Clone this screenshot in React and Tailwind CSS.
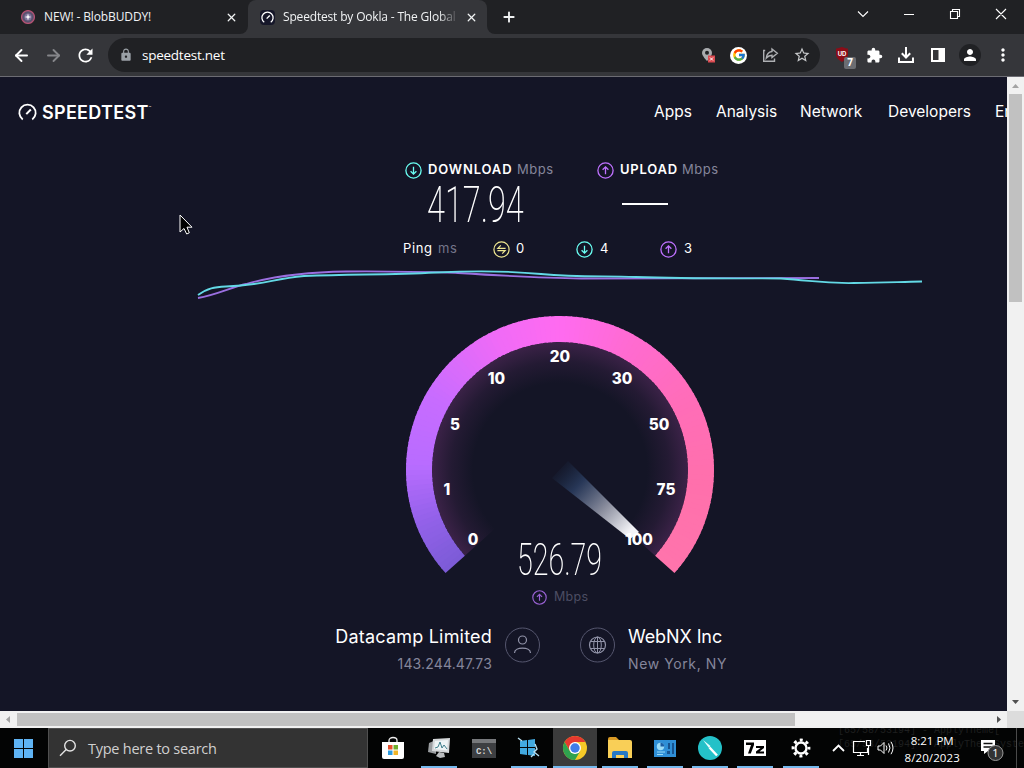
import {
  LuArrowLeft,
  LuArrowRight,
  LuX,
  LuPlus,
} from "react-icons/lu";
import {
  MdRefresh,
  MdLock,
  MdStarOutline,
  MdExtension,
  MdPerson,
  MdMoreVert,
} from "react-icons/md";
import { FcGoogle } from "react-icons/fc";

const CENTER = 160;

const GAUGE_STOPS = [
  [-132, [124, 91, 214]],
  [-112, [145, 97, 232]],
  [-88, [184, 108, 255]],
  [-60, [200, 108, 255]],
  [-25, [240, 107, 246]],
  [0, [255, 107, 240]],
  [30, [255, 107, 208]],
  [60, [255, 109, 185]],
  [95, [255, 112, 172]],
  [132, [255, 116, 172]],
];

const TICKS = [
  { label: "0", x: 73, y: 235 },
  { label: "1", x: 47, y: 185 },
  { label: "5", x: 55, y: 120 },
  { label: "10", x: 96.5, y: 74 },
  { label: "20", x: 160, y: 52 },
  { label: "30", x: 222, y: 74 },
  { label: "50", x: 259, y: 120 },
  { label: "75", x: 266, y: 185 },
  { label: "100", x: 239, y: 235 },
];

function polar(radius, deg) {
  const rad = (deg * Math.PI) / 180;
  return [CENTER + radius * Math.sin(rad), CENTER - radius * Math.cos(rad)];
}

function colorAt(deg) {
  let i = 0;
  while (i < GAUGE_STOPS.length - 2 && deg > GAUGE_STOPS[i + 1][0]) i++;
  const [a, from] = GAUGE_STOPS[i];
  const [b, to] = GAUGE_STOPS[i + 1];
  const t = (deg - a) / (b - a);
  return `rgb(${from.map((c, k) => Math.round(c + (to[k] - c) * t)).join(",")})`;
}

function Gauge() {
  const segments = [];
  for (let deg = -132; deg < 132; deg += 2) {
    const [x1, y1] = polar(141, deg);
    const [x2, y2] = polar(141, Math.min(deg + 2.6, 132));
    segments.push(
      <path
        key={deg}
        d={`M${x1} ${y1}A141 141 0 0 1 ${x2} ${y2}`}
        stroke={colorAt(deg + 1)}
        strokeWidth="26"
        fill="none"
      />
    );
  }
  const [sx, sy] = polar(128, -132);
  const [ex, ey] = polar(128, 132);

  return (
    <svg width="320" height="266" viewBox="0 0 320 266" className="block">
      <defs>
        <radialGradient id="glow" gradientUnits="userSpaceOnUse" cx="160" cy="160" r="128">
          <stop offset="0.68" stopColor="#6b3270" stopOpacity="0" />
          <stop offset="0.85" stopColor="#6b3270" stopOpacity="0.18" />
          <stop offset="1" stopColor="#6b3270" stopOpacity="0.45" />
        </radialGradient>
        <linearGradient id="needle" gradientUnits="userSpaceOnUse" x1="158" y1="155" x2="235" y2="228">
          <stop offset="0" stopColor="#1d3352" stopOpacity="0" />
          <stop offset="0.27" stopColor="#2b3d60" stopOpacity="0.85" />
          <stop offset="0.6" stopColor="#8b8e9e" />
          <stop offset="0.92" stopColor="#f3f3f7" />
        </linearGradient>
      </defs>
      <path d={`M160 160L${sx} ${sy}A128 128 0 1 1 ${ex} ${ey}Z`} fill="url(#glow)" />
      {segments}
      <path d="M168 151L239 222L230 229L152 168Z" fill="url(#needle)" />
      {TICKS.map((tick) => (
        <text
          key={tick.label}
          x={tick.x}
          y={tick.y}
          textAnchor="middle"
          fill="#fff"
          fontSize="15.3"
          fontWeight="800"
          fontFamily="Inter, sans-serif"
        >
          {tick.label}
        </text>
      ))}
    </svg>
  );
}

function CircleArrow({ color, up, size = 17 }) {
  return (
    <svg width={size} height={size} viewBox="0 0 17 17" fill="none" stroke={color} strokeWidth="1.3" className="shrink-0">
      <circle cx="8.5" cy="8.5" r="7.6" />
      <path d={up ? "M8.5 12.3V5M5.6 7.8L8.5 4.9L11.4 7.8" : "M8.5 4.7V12M5.6 9.2L8.5 12.1L11.4 9.2"} />
    </svg>
  );
}

function PingIcon() {
  return (
    <svg width="17" height="17" viewBox="0 0 17 17" fill="none" stroke="#f0e891" strokeWidth="1.2" className="shrink-0">
      <circle cx="8.5" cy="8.5" r="7.6" />
      <path d="M12.6 7.3H4.9L7.8 4.4" />
      <path d="M4.4 9.7H12.1L9.2 12.6" />
    </svg>
  );
}

function SpeedLogo({ size = 19 }) {
  return (
    <svg width={size} height={size} viewBox="0 0 20 20" fill="none" stroke="#fff" strokeWidth="1.9">
      <path d="M5 17.3A8.6 8.6 0 1 1 15 17.3" />
      <path d="M8.7 11.7L13.5 6.8" strokeWidth="2.1" />
    </svg>
  );
}

function TabStrip() {
  return (
    <div className="flex h-[34px] bg-[#202124] text-[12px] text-[#f1f3f4]">
      <div className="flex w-[240px] items-center pl-[21px]">
        <svg width="14" height="14" viewBox="0 0 14 14">
          <circle cx="7" cy="7" r="6.4" fill="#5b526f" stroke="#b55273" strokeWidth="1.3" />
          <circle cx="7" cy="7" r="3.6" fill="#81759c" />
          <path d="M7 3.6L7.8 6.2L10.4 7L7.8 7.8L7 10.4L6.2 7.8L3.6 7L6.2 6.2Z" fill="#fff" />
        </svg>
        <span className="ml-[9px] w-[181px] whitespace-nowrap tracking-[-0.12px]">NEW! - BlobBUDDY!</span>
        <LuX size={13} strokeWidth={2.4} />
      </div>
      <div className="flex items-end">
        <div className="h-2 w-2 bg-[#35363a]">
          <div className="h-2 w-2 rounded-br-lg bg-[#202124]" />
        </div>
      </div>
      <div className="flex w-[239px] items-center rounded-t-lg bg-[#35363a] pl-[12px]">
        <div className="flex size-[15px] items-center justify-center rounded-sm bg-[#16172a]">
          <SpeedLogo size={13} />
        </div>
        <span className="ml-[8px] w-[173px] overflow-hidden whitespace-nowrap tracking-[-0.17px] [mask-image:linear-gradient(to_right,#000_155px,transparent_176px)]">
          Speedtest by Ookla - The Global
        </span>
        <LuX size={13} strokeWidth={2.4} className="ml-[9px]" />
      </div>
      <div className="flex items-end">
        <div className="h-2 w-2 bg-[#35363a]">
          <div className="h-2 w-2 rounded-bl-lg bg-[#202124]" />
        </div>
      </div>
      <div className="flex w-[28px] items-center justify-center">
        <LuPlus size={16} strokeWidth={2.8} />
      </div>
      <svg width="170" height="28" viewBox="0 0 170 28" className="ml-auto" fill="none" stroke="#fff" strokeWidth="1.1">
        <path d="M4 11.5L9 16.5L14 11.5" />
        <path d="M50 14.5H60M96.5 11.5H103.5V18.5H96.5ZM98.5 11.5V9.5H105.5V16.5H103.5M142 9L152 19M152 9L142 19" />
      </svg>
    </div>
  );
}

function Toolbar() {
  return (
    <div className="flex h-[43px] items-center border-b border-[#6c6c73] bg-[#35363a] text-white">
      <LuArrowLeft size={19} strokeWidth={2.4} className="ml-3" />
      <LuArrowRight size={19} strokeWidth={2.4} className="ml-[13px] text-[#85868a]" />
      <MdRefresh size={21} className="ml-[12px]" />
      <div className="ml-[12px] flex h-[34px] w-[712px] items-center rounded-full bg-[#202124] pl-[11px]">
        <MdLock size={14} className="text-[#9aa0a6]" />
        <span className="ml-[9px] text-[13.5px] tracking-[-0.25px]">speedtest.net</span>
        <div className="ml-auto flex items-center pr-[9px]">
          <svg width="16" height="18" viewBox="0 0 16 18" className="mr-[14px]">
            <path d="M7 2A5 5 0 0 0 2 7C2 10 7 15 7 15C7 15 12 10 12 7A5 5 0 0 0 7 2Z" fill="#a9abae" />
            <circle cx="7" cy="6.7" r="2" fill="#202124" />
            <rect x="8" y="9.5" width="7" height="7" fill="#db4a50" />
            <path d="M10 11.5L13 14.5M13 11.5L10 14.5" stroke="#fff" />
          </svg>
          <div className="mr-[15px] flex size-[17px] items-center justify-center rounded-full bg-white">
            <FcGoogle size={14} />
          </div>
          <svg width="17" height="16" viewBox="0 0 17 16" fill="none" stroke="#aeb0b3" strokeWidth="1.4" className="mr-[14px]">
            <path d="M3.2 3.5H1.7V14.3H12.5V11.5" />
            <path d="M10 2L15.3 6.3L10 10.5V8.2C7.5 8.2 6 9 4.3 11C4.7 7.5 6.6 5 10 4.5Z" />
          </svg>
          <MdStarOutline size={18} className="text-[#c6c8ca]" />
        </div>
      </div>
      <div className="relative ml-[14px] size-[17px]">
        <svg width="17" height="17" viewBox="0 0 17 17">
          <path d="M2 1.5C4.5 1.5 7 0 8 0C10 .8 12 1.5 14 1.5V7C14 11 11 13 8 15C5 13 2 11 2 7Z" fill="#8b0d18" />
          <text x="8" y="9" textAnchor="middle" fontSize="6" fontWeight="700" fill="#fff" fontFamily="Inter, sans-serif">UD</text>
        </svg>
        <span className="absolute left-[10px] top-[10px] flex h-[12px] w-[12px] items-center justify-center rounded-[2px] bg-[#6b6d72] text-[10px] font-bold">
          7
        </span>
      </div>
      <MdExtension size={17} className="ml-[15px]" />
      <svg width="18" height="18" viewBox="0 0 18 18" className="ml-[14px]" fill="none" stroke="#fff" strokeWidth="2">
        <path d="M9 1V11M4.8 7.3L9 11.5L13.2 7.3M2 11.5V16H16V11.5" />
      </svg>
      <svg width="14" height="14" viewBox="0 0 14 14" className="ml-[16px]" fill="none" stroke="#fff" strokeWidth="2">
        <path d="M1 1H13V13H1Z" />
        <path d="M8.5 1H13V13H8.5Z" fill="#fff" />
      </svg>
      <div className="ml-[14px] flex size-[22px] items-center justify-center rounded-full bg-[#202124]">
        <MdPerson size={18} />
      </div>
      <MdMoreVert size={20} className="ml-[12px]" />
    </div>
  );
}

function SiteHeader() {
  return (
    <div className="flex h-[70px] w-[1120px] items-center pl-[18px] text-white">
      <SpeedLogo size={19} />
      <div className="ml-[5px] mt-[2px] flex w-[110px] items-start">
        <span className="whitespace-nowrap text-[18px] font-semibold leading-6 tracking-[0.3px]">SPEEDTEST</span>
        <span className="mt-[5px] text-[4px] leading-none">™</span>
      </div>
      <div className="ml-[502px] flex text-[15.5px]">
        <span className="w-[62px]">Apps</span>
        <span className="w-[84px]">Analysis</span>
        <span className="w-[88px]">Network</span>
        <span className="w-[107px]">Developers</span>
        <span>En</span>
      </div>
    </div>
  );
}

function Results() {
  return (
    <>
      <div className="flex pl-[405px] pt-[13px] text-white">
        <div className="w-[192px]">
          <div className="flex h-5 items-center whitespace-nowrap text-[13px]">
            <CircleArrow color="#6afff3" />
            <span className="ml-[6px] w-[89px] font-semibold tracking-[0.85px]">DOWNLOAD</span>
            <span className="tracking-[0.5px] text-[#85869b]">Mbps</span>
          </div>
          <div className="ml-[22px] flex h-[50px] items-center">
            <span className="origin-left scale-x-[0.65] whitespace-nowrap font-[Roboto] text-[50px] font-extralight leading-none">
              417.94
            </span>
          </div>
        </div>
        <div>
          <div className="flex h-5 items-center whitespace-nowrap text-[13px]">
            <CircleArrow color="#bf71ff" up />
            <span className="ml-[6px] w-[62px] font-semibold tracking-[0.8px]">UPLOAD</span>
            <span className="tracking-[0.5px] text-[#85869b]">Mbps</span>
          </div>
          <div className="ml-[25px] mt-[23px] h-[2px] w-[46px] bg-white" />
        </div>
      </div>
      <div className="mt-[9px] flex h-5 items-center pl-[403px] text-[13px] text-white">
        <span className="w-[35px] tracking-[0.6px]">Ping</span>
        <span className="w-[55px] tracking-[0.6px] text-[#74758a]">ms</span>
        <PingIcon />
        <span className="ml-[6px] w-[60px]">0</span>
        <CircleArrow color="#6afff3" />
        <span className="ml-[7px] w-[60px]">4</span>
        <CircleArrow color="#bf71ff" up />
        <span className="ml-[7px]">3</span>
      </div>
      <svg width="730" height="34" viewBox="0 0 730 34" className="ml-[196px] mt-[8px] block" fill="none" strokeWidth="1.8">
        <path d="M2 31C20 28 36 20 50 17C75 10 110 5 150 4.5C200 4 230 5 262 6C310 9 345 11 385 11.5C450 12 520 11 623 11" stroke="#9b6fe0" />
        <path d="M2 28C12 21 18 20 30 19.5C70 18 75 12 108 9C160 7 190 8 240 5.5C290 3 320 4.5 345 7C380 10 400 9 440 10C500 12 540 11 585 11.5C620 14 625 16.5 658 16C690 16 700 15 726 14.5" stroke="#63d9e5" />
      </svg>
    </>
  );
}

function GaugePanel() {
  return (
    <div className="relative ml-[400px] mt-[9px] h-[313px] w-[320px]">
      <Gauge />
      <div className="absolute left-[117px] top-[228px] flex h-[44px] items-center">
        <span className="origin-left scale-x-[0.65] whitespace-nowrap font-[Roboto] text-[44px] font-extralight leading-none text-white">
          526.79
        </span>
      </div>
      <div className="flex items-center pl-[132px] pt-[12px] text-[12.5px] text-[#4c4d63]">
        <CircleArrow color="#9a62d4" up size={15} />
        <span className="ml-[7px] tracking-[0.3px]">Mbps</span>
      </div>
    </div>
  );
}

function HostInfo() {
  return (
    <div className="flex w-[1007px] items-center text-[18px] leading-[27px] text-white">
      <div className="w-[492px] text-right">
        <p className="tracking-[0.2px]">Datacamp Limited</p>
        <p className="text-[14px] tracking-[0.15px] text-[#85869b]">143.244.47.73</p>
      </div>
      <svg width="129" height="36" viewBox="0 0 129 36" className="mb-[11px] ml-[7px]" fill="none" stroke="#9193a8">
        <circle cx="23.5" cy="18" r="17" stroke="#55566e" />
        <circle cx="23.5" cy="13" r="4" strokeWidth="1.2" />
        <path d="M15.5 26C15.5 19.5 31.5 19.5 31.5 26" strokeWidth="1.2" />
        <circle cx="98.5" cy="18" r="17" stroke="#55566e" />
        <circle cx="98.5" cy="18" r="8" strokeWidth="1.2" />
        <ellipse cx="98.5" cy="18" rx="3.8" ry="8" />
        <path d="M98.5 10V26M91.5 14.5H105.5M91.5 21.5H105.5" />
      </svg>
      <div>
        <p className="tracking-[-0.1px]">WebNX Inc</p>
        <p className="text-[14px] tracking-[0.6px] text-[#85869b]">New York, NY</p>
      </div>
    </div>
  );
}

function Page() {
  return (
    <div className="flex h-[634px]">
      <div className="relative w-[1007px] overflow-hidden bg-[#141526] font-[Inter]">
        <SiteHeader />
        <Results />
        <GaugePanel />
        <HostInfo />
        <svg width="14" height="21" viewBox="0 0 14 21" className="absolute left-[179px] top-[137px]">
          <path d="M1 1V18L5 14.5L7.7 20L10.3 18.8L8 13.2H13Z" fill="#000" stroke="#fff" />
        </svg>
      </div>
      <div className="flex w-[17px] flex-col items-center bg-[#f1f1f1]">
        <svg width="17" height="17" viewBox="0 0 17 17">
          <path d="M5 11L8.5 7L12 11Z" fill="#a3a3a3" />
        </svg>
        <div className="h-[208px] w-[13px] bg-[#c1c1c1]" />
        <svg width="17" height="17" viewBox="0 0 17 17" className="mt-auto">
          <path d="M5 6L8.5 10L12 6Z" fill="#505050" />
        </svg>
      </div>
    </div>
  );
}

function HorizontalScrollbar() {
  return (
    <div className="flex h-[17px] items-center bg-[#f1f1f1]">
      <svg width="17" height="17" viewBox="0 0 17 17">
        <path d="M10 5L6 8.5L10 12Z" fill="#a3a3a3" />
      </svg>
      <div className="h-[13px] w-[778px] bg-[#c1c1c1]" />
      <svg width="17" height="17" viewBox="0 0 17 17" className="ml-auto">
        <path d="M7 5L11 8.5L7 12Z" fill="#505050" />
      </svg>
      <div className="h-full w-[17px] bg-[#dcdcdc]" />
    </div>
  );
}

function StoreIcon() {
  return (
    <svg width="24" height="24" viewBox="0 0 24 24">
      <path d="M8 7V4.5C8 0.5 16 0.5 16 4.5V7" fill="none" stroke="#eee" strokeWidth="1.3" />
      <path d="M1 6H23V21Q23 23 21 23H3Q1 23 1 21Z" fill="#fff" />
      <path d="M7 9H11.5V13.5H7Z" fill="#e5502d" />
      <path d="M12.5 9H17V13.5H12.5Z" fill="#6fae2e" />
      <path d="M7 14.5H11.5V19H7Z" fill="#2c9be0" />
      <path d="M12.5 14.5H17V19H12.5Z" fill="#f0b428" />
    </svg>
  );
}

function MonitorIcon() {
  return (
    <svg width="24" height="24" viewBox="0 0 24 24">
      <path d="M2 7L9 4V18L1 16Z" fill="#9a9da0" />
      <path d="M6 3L23 2L22 17L5 15Z" fill="#d5d8da" />
      <path d="M8 5L21 4L20 14.5L7 13Z" fill="#eef4f5" />
      <path d="M8 12L11 11L13 6L15 12L17 9L20 13" fill="none" stroke="#3f7f8c" />
      <path d="M12 16L17 17L18 21L13 22L9 20Z" fill="#b9bcbe" />
    </svg>
  );
}

function CmdIcon() {
  return (
    <svg width="24" height="19" viewBox="0 0 24 19">
      <path d="M0 0H24V19H0Z" fill="#3d3f42" />
      <path d="M0 0H24V4H0Z" fill="#77797c" />
      <text x="12" y="14.5" textAnchor="middle" fontSize="9" fontWeight="700" fill="#d8d8d8" fontFamily="'Liberation Mono', monospace">
        C:\
      </text>
    </svg>
  );
}

function TilesIcon() {
  return (
    <svg width="24" height="24" viewBox="0 0 24 24">
      <path d="M3 5L10 4V11H3ZM11 4L18 3V11H11ZM3 12H10V19L3 18ZM11 12H18V20L11 19Z" fill="#42a9df" />
      <path d="M1 2L5 5M18 8L20 13L17 16L22 20M14 21L17 18" stroke="#b8dff0" strokeWidth="1.4" fill="none" />
    </svg>
  );
}

function ChromeIcon() {
  return (
    <svg width="26" height="26" viewBox="0 0 26 26">
      <circle cx="13" cy="13" r="12" fill="#f6c927" />
      <path d="M13 7H23.4A12 12 0 0 0 2.6 7L7.8 16Z" fill="#e5392f" />
      <path d="M2.6 7A12 12 0 0 0 13 25L18.2 16L13 19L7.8 16Z" fill="#2fa24f" />
      <circle cx="13" cy="13" r="6" fill="#fff" />
      <circle cx="13" cy="13" r="4.7" fill="#3f7de8" />
    </svg>
  );
}

function FolderIcon() {
  return (
    <svg width="26" height="24" viewBox="0 0 26 24">
      <path d="M1 3Q1 1 3 1H9L12 4H1Z" fill="#d99a25" />
      <path d="M1 4H23Q25 4 25 6V22H1Z" fill="#f9cf57" />
      <path d="M5 22V17Q5 15 7 15H19Q21 15 21 17V22H17V19H9V22Z" fill="#2578c4" />
    </svg>
  );
}

function PanelIcon() {
  return (
    <svg width="22" height="17" viewBox="0 0 22 17">
      <path d="M0 0H22V17H0Z" fill="#2f8fd6" />
      <circle cx="6.5" cy="6.5" r="3.7" fill="#9bdcf7" />
      <path d="M6.5 6.5V2.8A3.7 3.7 0 0 1 10.2 6.5Z" fill="#1d5fa5" />
      <path d="M3 12H11M3 14.5H9" stroke="#9bdcf7" />
      <path d="M14 3H16V9H14ZM18 3H20V14H18ZM13 11H16V14H13Z" fill="#16538f" />
    </svg>
  );
}

function PenIcon() {
  return (
    <svg width="24" height="24" viewBox="0 0 24 24">
      <circle cx="12" cy="12" r="12" fill="#24c1c8" />
      <path d="M5 4L12.5 10L11 12Z" fill="#e9ffff" />
      <path d="M11.5 11.5L19 19.5" stroke="#fff" strokeWidth="2.4" />
    </svg>
  );
}

function SevenZipIcon() {
  return (
    <svg width="22" height="16" viewBox="0 0 22 16">
      <path d="M0 0H22V16H0Z" fill="#fff" />
      <path d="M2 2.5H10V5L6.8 13.5H4L7 5H2Z" fill="#000" />
      <path d="M12 6H20V8L15.5 11.5H20V13.5H12V11.5L16.5 8H12Z" fill="#000" />
    </svg>
  );
}

function GearIcon() {
  return (
    <svg width="20" height="20" viewBox="0 0 20 20" fill="none" stroke="#fff">
      <circle cx="10" cy="10" r="5.5" strokeWidth="2.4" />
      <circle cx="10" cy="10" r="8" strokeWidth="2.8" strokeDasharray="3 3.283" strokeDashoffset="1.5" />
    </svg>
  );
}

const APPS = [
  { name: "monitor", icon: MonitorIcon, open: true },
  { name: "cmd", icon: CmdIcon },
  { name: "tiles", icon: TilesIcon, open: true },
  { name: "chrome", icon: ChromeIcon, open: true, active: true },
  { name: "files", icon: FolderIcon, open: true },
  { name: "panel", icon: PanelIcon, open: true },
  { name: "pen", icon: PenIcon, open: true },
  { name: "7zip", icon: SevenZipIcon, open: true },
  { name: "settings", icon: GearIcon, open: true },
];

function AppButton({ icon: Icon, open, active }) {
  return (
    <div className="flex h-10 w-[45.2px] flex-col items-center">
      <div className={active ? "flex h-[38px] w-11 items-center justify-center bg-[#3b3b3b] pt-[2px]" : "flex h-[38px] w-11 items-center justify-center pt-[2px]"}>
        <Icon />
      </div>
      {open && <div className={active ? "h-[2px] w-11 bg-[#76b9ed]" : "h-[2px] w-9 bg-[#76b9ed]"} />}
    </div>
  );
}

function Taskbar() {
  return (
    <div className="relative flex h-10 overflow-hidden bg-[#030404] text-white">
      <div className="flex w-12 items-center justify-center">
        <svg width="19" height="19" viewBox="0 0 19 19" fill="#5fb4f5" className="mr-[2px]">
          <path d="M0 0H9V9H0ZM10 0H19V9H10ZM0 10H9V19H0ZM10 10H19V19H10Z" />
        </svg>
      </div>
      <div className="flex w-[320px] items-center border border-[#505050] bg-[#333333] pl-[10px]">
        <svg width="18" height="18" viewBox="0 0 18 18" fill="none" stroke="#e4e4e4" strokeWidth="1.4">
          <circle cx="11" cy="6.7" r="5.3" />
          <path d="M7.2 10.5L1 16.7" />
        </svg>
        <span className="ml-[11px] mt-[2px] text-[14.5px] tracking-[-0.25px] text-[#d0d0d0]">Type here to search</span>
      </div>
      <div className="ml-[1px] flex">
        <div className="flex w-[47.5px] items-center justify-center">
          <StoreIcon />
        </div>
        {APPS.map((app) => (
          <AppButton key={app.name} icon={app.icon} open={app.open} active={app.active} />
        ))}
      </div>
      {/* desktop log text showing through the translucent bar */}
      <div className="absolute left-[838px] top-[-4px] whitespace-pre font-['Liberation_Mono'] text-[10px] leading-[14px] text-[#1e1f1f]">
        <p>[65/58/53194] - ApplyTheme[</p>
        <p>[65/58/53194] - ApplyThemeSystem</p>
      </div>
      <div className="relative ml-[9px] flex items-center">
        <svg width="66" height="20" viewBox="0 0 66 20" fill="none" stroke="#fff">
          <path d="M1 13L6.5 7.5L12 13" strokeWidth="1.8" />
          <path d="M33 3.5H21.5V14.5H35.5V10M25 17.5H32M28.5 14.5V17.5" strokeWidth="1.2" />
          <path d="M34.5 2.5H38.5V7.5H34.5ZM36.5 7.5V17" strokeWidth="1.2" />
          <path d="M46 8H48.5L52 4.5V15.5L48.5 12H46Z" />
          <path d="M54 7.5Q56 10 54 12.5M56.5 5.5Q59.5 10 56.5 14.5M59 3.8Q63 10 59 16.2" />
        </svg>
        <div className="-ml-[1px] w-[70px] whitespace-nowrap pt-[1px] text-center text-[11.5px] leading-[17px]">
          <p>8:21 PM</p>
          <p className="tracking-[0.1px]">8/20/2023</p>
        </div>
        <svg width="26" height="26" viewBox="0 0 26 26" className="ml-[12px]">
          <path d="M2 5H16V16H9L5 19V16H2Z" fill="#fff" />
          <path d="M4.5 8.5H13.5M4.5 12H13.5" stroke="#111" strokeWidth="1.3" />
          <circle cx="16.5" cy="18" r="7.5" fill="#333" stroke="#9a9a9a" />
          <text x="16.5" y="22" textAnchor="middle" fontSize="11" fill="#fff" fontFamily="'Open Sans', sans-serif">1</text>
        </svg>
      </div>
      <div className="absolute right-[7px] top-0 h-10 w-px bg-[#4a4a4a]" />
    </div>
  );
}

export default function App() {
  return (
    <div className="h-[768px] w-[1024px] overflow-hidden bg-[#141526] font-['Open_Sans']">
      <TabStrip />
      <Toolbar />
      <Page />
      <HorizontalScrollbar />
      <Taskbar />
    </div>
  );
}
